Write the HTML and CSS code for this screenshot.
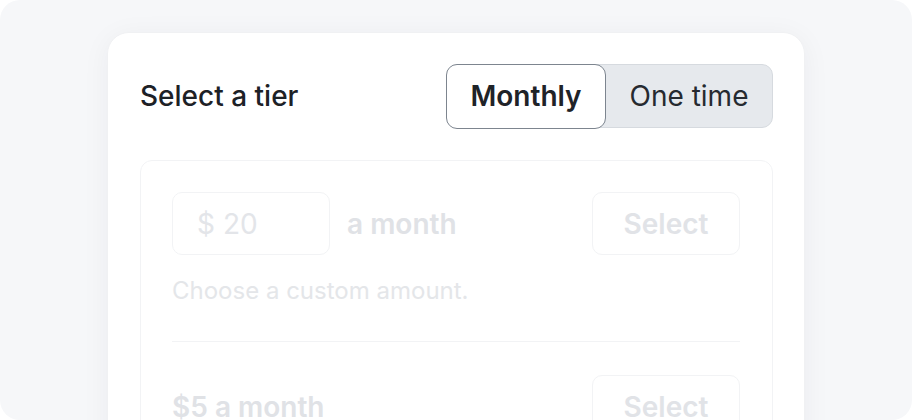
FILE: index.html
```html
<!DOCTYPE html>
<html>
<head>
<meta charset="utf-8">
<link rel="stylesheet" href="styles.css">
</head>
<body>
<div class="frame">
  <div class="card">
    <div class="header">
      <h2 class="title">Select a tier</h2>
      <div class="toggle">
        <button class="opt active">Monthly</button>
        <button class="opt">One time</button>
      </div>
    </div>
    <div class="tiers">
      <div class="tier">
        <div class="row">
          <div class="amount"><span class="cur">$</span> <span>20</span></div>
          <span class="per">a month</span>
          <span class="spacer"></span>
          <button class="select">Select</button>
        </div>
        <p class="desc">Choose a custom amount.</p>
      </div>
      <div class="tier">
        <div class="row">
          <span class="price">$5 a month</span>
          <span class="spacer"></span>
          <button class="select">Select</button>
        </div>
      </div>
    </div>
  </div>
</div>
</body>
</html>
```

FILE: styles.css
```css
html, body {
  margin: 0;
  padding: 0;
  background: #ffffff;
  font-family: Inter, "Noto Sans", sans-serif;
}
.frame {
  height: 420px;
  box-sizing: border-box;
  background: #f6f7f9;
  border-radius: 20px;
  padding-top: 32px;
  overflow: hidden;
}
.card {
  width: 698px;
  box-sizing: border-box;
  margin: 0 auto;
  background: #ffffff;
  border: 1px solid #f0f1f3;
  border-radius: 22px;
  padding: 31px 31px 32px 32px;
  box-shadow: 0 4px 28px rgba(30, 40, 60, 0.05);
  min-height: 500px;
}
.header {
  display: flex;
  align-items: center;
  justify-content: space-between;
  height: 64px;
}
.title {
  margin: 0;
  font-size: 28px;
  font-weight: 500;
  color: #1d2126;
  letter-spacing: 0;
}
.toggle {
  display: flex;
  height: 64px;
  box-sizing: border-box;
  background: #e6e9ed;
  border: 1.5px solid #d6dadf;
  border-radius: 11px;
}
.opt {
  font-family: inherit;
  font-size: 28px;
  border: none;
  background: transparent;
  color: #262a30;
  padding: 0;
  cursor: pointer;
}
.opt:first-child {
  width: 160px;
  margin: -1.5px 0 -1.5px -1.5px;
}
.opt:last-child {
  width: 166px;
}
.opt.active {
  background: #ffffff;
  border: 1.5px solid #7d858f;
  border-radius: 11px;
  font-weight: 600;
  color: #1f2328;
}
.tiers {
  margin-top: 32px;
  border: 1px solid #f2f3f5;
  border-radius: 12px;
  padding: 31px 32px 0 31px;
}
.tier {
  padding-bottom: 34px;
}
.tier + .tier {
  border-top: 1.5px solid #f2f3f5;
  padding-top: 33px;
}
.row {
  display: flex;
  align-items: center;
  height: 63px;
}
.amount {
  width: 158px;
  height: 63px;
  box-sizing: border-box;
  border: 1.5px solid #f2f3f5;
  border-radius: 10px;
  padding-left: 24px;
  display: flex;
  align-items: center;
  gap: 8px;
  font-size: 28px;
  color: #e3e5e9;
}
.per {
  margin-left: 17px;
  font-size: 28px;
  font-weight: 600;
  color: #e0e2e6;
}
.spacer {
  flex: 1;
}
.select {
  width: 148px;
  height: 63px;
  box-sizing: border-box;
  font-family: inherit;
  font-size: 28px;
  font-weight: 600;
  color: #e1e3e7;
  background: #ffffff;
  border: 1.5px solid #f2f3f5;
  border-radius: 10px;
}
.desc {
  margin: 20px 0 0 0;
  font-size: 24px;
  line-height: 32px;
  color: #e4e6e9;
}
.price {
  font-size: 28px;
  font-weight: 600;
  color: #e0e2e6;
}
```
